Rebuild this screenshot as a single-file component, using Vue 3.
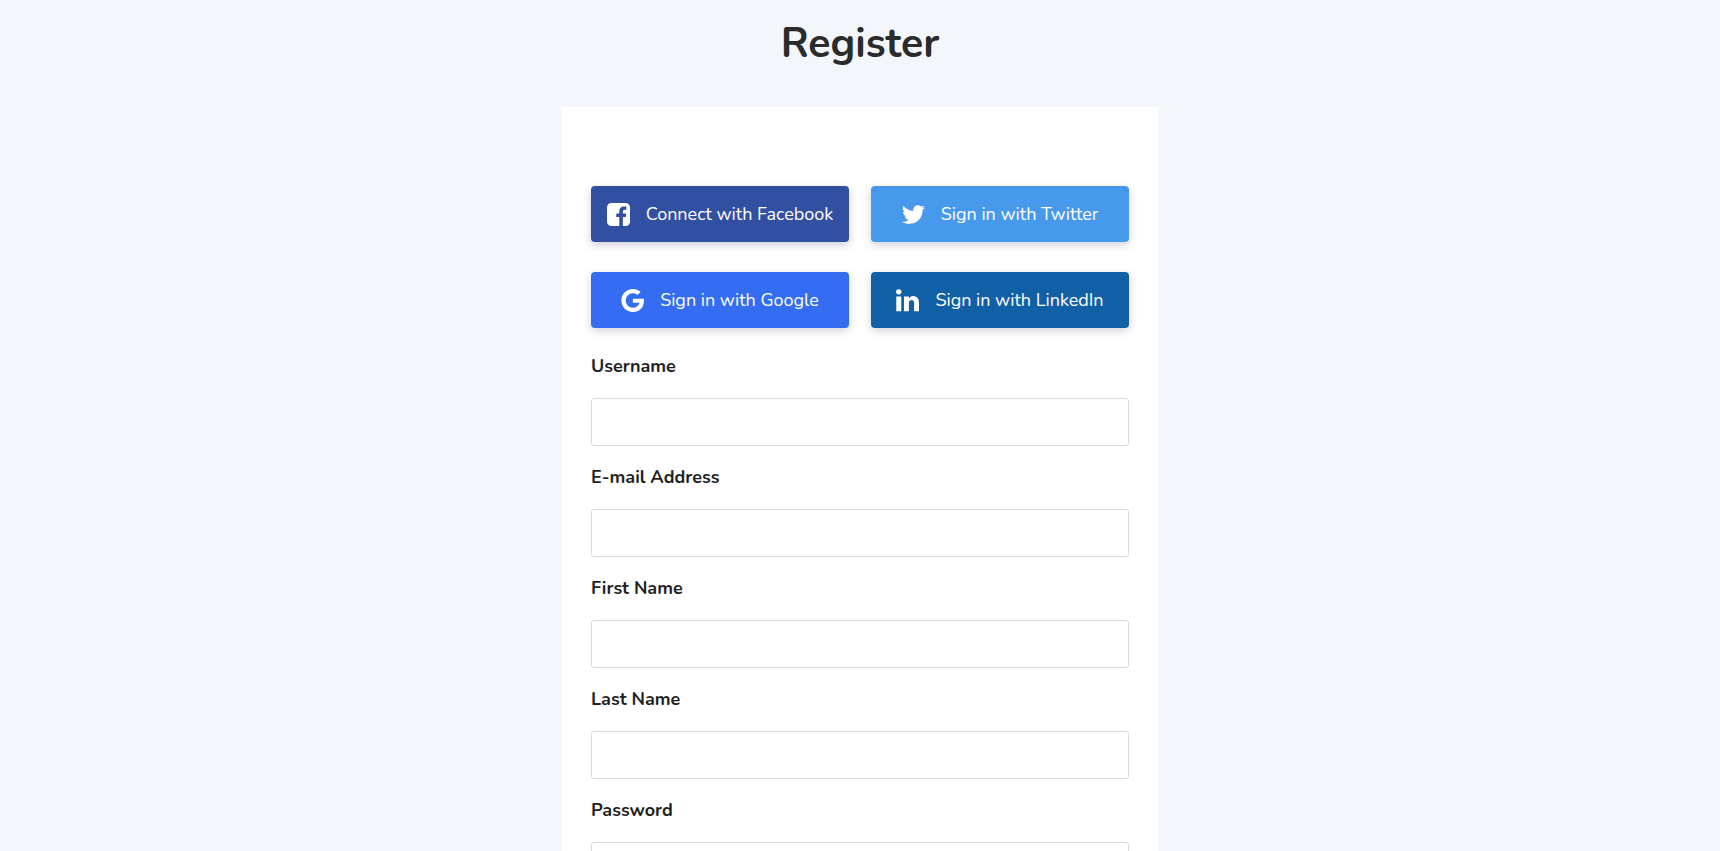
<template>
  <main class="register-page">
    <h1 class="title">Register</h1>

    <form class="card" @submit.prevent>
      <!-- Social sign in -->
      <div class="social-grid">
        <button
          v-for="provider in providers"
          :key="provider.name"
          type="button"
          class="social-button"
          :class="provider.name"
        >
          <svg class="social-icon" :viewBox="provider.viewBox" aria-hidden="true">
            <path :d="provider.path" fill="currentColor" />
          </svg>
          <span>{{ provider.label }}</span>
        </button>
      </div>

      <!-- Account details -->
      <div v-for="field in fields" :key="field.id" class="field">
        <label class="field-label" :for="field.id">{{ field.label }}</label>
        <input
          :id="field.id"
          v-model="form[field.id]"
          class="field-input"
          :type="field.type"
        />
      </div>
    </form>
  </main>
</template>

<script setup>
import { reactive } from 'vue';

const providers = [
  {
    name: 'facebook',
    label: 'Connect with Facebook',
    viewBox: '0 128 1536 1536',
    path: 'M1248 128q119 0 203.5 84.5t84.5 203.5v960q0 119-84.5 203.5t-203.5 84.5h-188v-595h199l30-232h-229v-148q0-56 23.5-84t91.5-28l122-1v-207q-63-9-178-9-136 0-217.5 80t-81.5 226v171h-200v232h200v595h-532q-119 0-203.5-84.5t-84.5-203.5v-960q0-119 84.5-203.5t203.5-84.5h960z',
  },
  {
    name: 'twitter',
    label: 'Sign in with Twitter',
    viewBox: '0 0 512 512',
    path: 'M459.37 151.716c.325 4.548.325 9.097.325 13.645 0 138.72-105.583 298.558-298.558 298.558-59.452 0-114.68-17.219-161.137-47.106 8.447.974 16.568 1.299 25.34 1.299 49.055 0 94.213-16.568 130.274-44.832-46.132-.975-84.792-31.188-98.112-72.772 6.498.974 12.995 1.624 19.818 1.624 9.421 0 18.843-1.3 27.614-3.573-48.081-9.747-84.143-51.98-84.143-102.985v-1.299c13.969 7.797 30.214 12.67 47.431 13.319-28.264-18.843-46.781-51.005-46.781-87.391 0-19.492 5.197-37.36 14.294-52.954 51.655 63.675 129.3 105.258 216.365 109.807-1.624-7.797-2.599-15.918-2.599-24.04 0-57.828 46.782-104.934 104.934-104.934 30.213 0 57.502 12.67 76.67 33.137 23.715-4.548 46.456-13.32 66.599-25.34-7.798 24.366-24.366 44.833-46.132 57.827 21.117-2.273 41.584-8.122 60.426-16.243-14.292 20.791-32.161 39.308-52.628 54.253z',
  },
  {
    name: 'google',
    label: 'Sign in with Google',
    viewBox: '-8 8 496 496',
    path: 'M488 261.8C488 403.3 391.1 504 248 504 110.8 504 0 393.2 0 256S110.8 8 248 8c66.8 0 123 24.5 166.3 64.9l-67.5 64.9C258.5 52.6 94.3 116.6 94.3 256c0 86.5 69.1 156.6 153.7 156.6 98.2 0 135-70.4 140.8-106.9H248v-85.3h236.1c2.3 12.7 3.9 24.9 3.9 41.4z',
  },
  {
    name: 'linkedin',
    label: 'Sign in with LinkedIn',
    viewBox: '128 128 1536 1536',
    path: 'M477 625v991h-330v-991h330zm21-306q1 73-50.5 122t-135.5 49h-2q-82 0-132-49t-50-122q0-74 51.5-122.5t134.5-48.5 133 48.5 51 122.5zm1166 729v568h-329v-530q0-105-40.5-164.5t-126.5-59.5q-63 0-105.5 34.5t-63.5 85.5q-11 30-11 81v553h-329q2-399 2-647t-1-296l-1-48h329v144h-2q20-32 41-56t56.5-52 87-43.5 114.5-15.5q171 0 275 113.5t104 332.5z',
  },
];

const fields = [
  { id: 'username', label: 'Username', type: 'text' },
  { id: 'email', label: 'E-mail Address', type: 'email' },
  { id: 'firstName', label: 'First Name', type: 'text' },
  { id: 'lastName', label: 'Last Name', type: 'text' },
  { id: 'password', label: 'Password', type: 'password' },
];

const form = reactive({
  username: '',
  email: '',
  firstName: '',
  lastName: '',
  password: '',
});
</script>

<style>
body {
  margin: 0;
  background: #f3f7fc;
}

/* The form runs past the fold, keep the scrollbar out of the layout */
html {
  scrollbar-width: none;
}
</style>

<style scoped>
.register-page {
  display: flex;
  flex-direction: column;
  align-items: center;
  font-family: Nunito, Lato, sans-serif;
  color: #2b2b2b;
}

.title {
  margin: 16px 0 35px;
  font-size: 41px;
  line-height: 56px;
  font-weight: 700;
}

.card {
  box-sizing: border-box;
  width: 100%;
  max-width: 596px;
  padding: 79px 29px 32px;
  background: #fff;
}

.social-grid {
  display: grid;
  grid-template-columns: repeat(2, minmax(0, 1fr));
  gap: 30px 22px;
  margin-bottom: 26px;
}

.social-button {
  display: flex;
  align-items: center;
  justify-content: center;
  gap: 16px;
  height: 56px;
  padding: 0 12px;
  border: 0;
  border-radius: 4px;
  box-shadow: 0 3px 8px rgba(40, 40, 90, 0.22);
  color: #fff;
  font-family: inherit;
  font-size: 18px;
  line-height: 24px;
  white-space: nowrap;
  cursor: pointer;
}

.social-icon {
  flex: none;
  width: 23px;
  height: 23px;
}

.facebook {
  background: #3150a2;
}

.twitter {
  background: #4799eb;
}

.google {
  background: #346df1;
}

.linkedin {
  background: #1160a6;
}

.field {
  display: flex;
  flex-direction: column;
  gap: 19px;
  margin-bottom: 19px;
}

.field-label {
  font-size: 18px;
  line-height: 25px;
  font-weight: 700;
  color: #1f1f1f;
}

.field-input {
  box-sizing: border-box;
  width: 100%;
  height: 48px;
  padding: 0 12px;
  border: 1px solid #d9d9d9;
  border-radius: 3px;
  background: #fff;
  font-family: inherit;
  font-size: 18px;
}

.field-input:focus {
  outline: none;
  border-color: #4799eb;
}

@media (max-width: 600px) {
  .social-grid {
    grid-template-columns: 1fr;
  }
}
</style>
